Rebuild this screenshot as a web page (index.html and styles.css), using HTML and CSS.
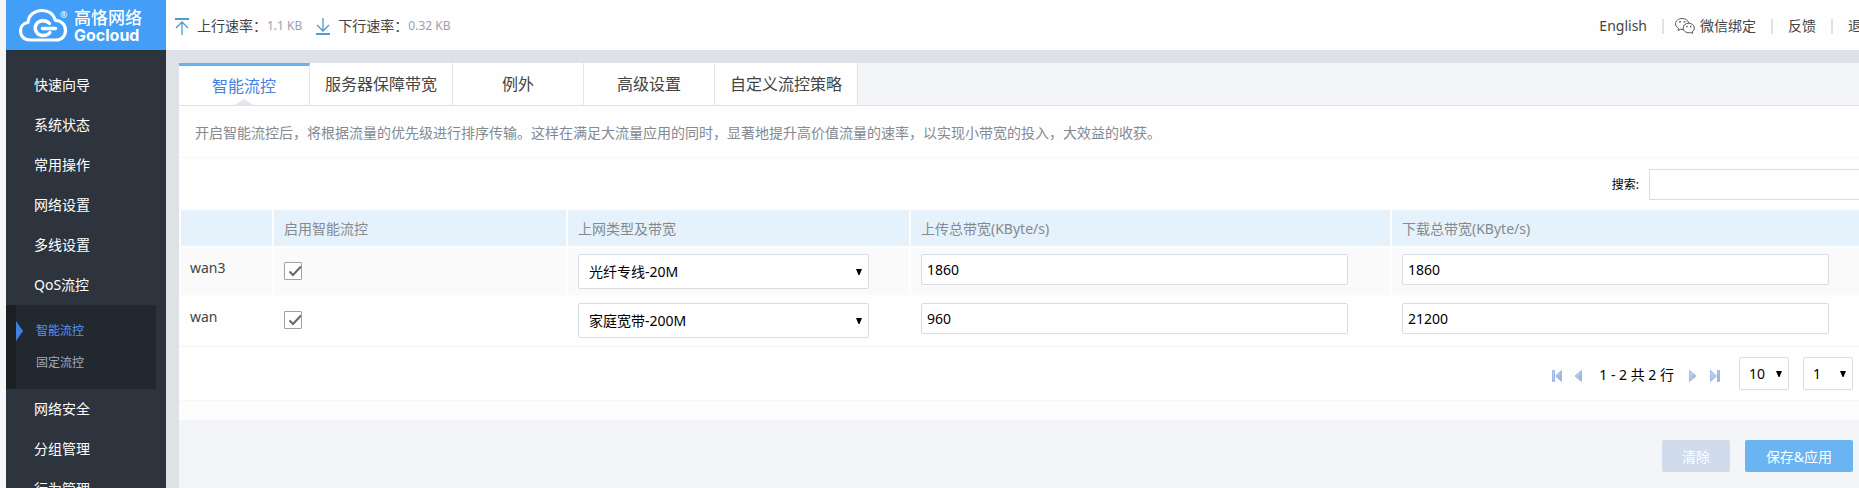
FILE: index.html
```html
<!DOCTYPE html>
<html lang="zh-CN">
<head>
    <meta charset="UTF-8">
    <meta name="viewport" content="width=device-width, initial-scale=1.0">
    <title>智能流控</title>
    <link rel="stylesheet" href="styles.css">
</head>
<body>

    <div class="page">
        <aside class="sidebar">
            <a class="logo" href="#">
                <svg class="logo-cloud" viewBox="0 0 50 34" width="50" height="34" fill="none" stroke="#fff" stroke-linecap="round">
                    <path d="M12 32 C5.500 32 2.500 27.500 2.500 23 C2.500 18.500 5.500 15 10 14.500 C10.500 7 16.500 2.500 24 2.500 C30.500 2.500 35.500 6 37.500 12.500 C43.500 12.500 47.500 17 47.500 22.500 C47.500 28 43.500 32 38 32 Z" stroke-width="3.200" stroke-linejoin="round"/>
                    <path d="M31.500 15.500 C28 11.500 21 11.800 18.300 16.200 C15.500 21 18.500 27.500 25 27.500 C28 27.500 30.500 26.500 32 24.500" stroke-width="3.400"/>
                    <path d="M24.500 20.500 H37.500" stroke-width="3.600"/>
                </svg>
                <span class="logo-mark">®</span>
                <span class="logo-text">
                    <span class="logo-cn">高恪网络</span>
                    <span class="logo-en">Gocloud</span>
                </span>
            </a>
            <nav class="menu">
                <a href="#">快速向导</a>
                <a href="#">系统状态</a>
                <a href="#">常用操作</a>
                <a href="#">网络设置</a>
                <a href="#">多线设置</a>
                <a href="#">QoS流控</a>
                <div class="submenu">
                    <a class="active" href="#">智能流控</a>
                    <a href="#">固定流控</a>
                </div>
                <a href="#">网络安全</a>
                <a href="#">分组管理</a>
                <a href="#">行为管理</a>
            </nav>
        </aside>

        <div class="content">
            <header class="topbar">
                <div class="rates">
                    <svg viewBox="0 0 14 17" width="14" height="17" fill="none" stroke="#4f9bc9">
                        <path d="M0 1 H14" stroke-width="2"/>
                        <path d="M7 17 V4 M1 10 L7 4 L13 10" stroke-width="1.300"/>
                    </svg>
                    <span class="rate-name">上行速率：</span>
                    <span class="rate-value">1.1 KB</span>
                    <svg class="down" viewBox="0 0 14 17" width="14" height="17" fill="none" stroke="#4f9bc9">
                        <path d="M0 16 H14" stroke-width="2"/>
                        <path d="M7 0 V13 M1 7 L7 13 L13 7" stroke-width="1.300"/>
                    </svg>
                    <span class="rate-name">下行速率：</span>
                    <span class="rate-value">0.32 KB</span>
                </div>
                <nav class="links">
                    <a href="#">English</a>
                    <a class="wechat" href="#">
                        <svg viewBox="0 0 20 16" width="20" height="16" fill="none" stroke="#555">
                            <path d="M8.500 11.500 C7.500 11.600 6.500 11.500 5.500 11.200 L3 12.500 L3.500 10.300 C1.500 9 0.500 7.500 0.500 5.800 C0.500 2.900 3.500 0.500 7.200 0.500 C10.600 0.500 13.200 2.400 13.800 5"/>
                            <path d="M13.600 5.200 C16.800 5.200 19.400 7.300 19.400 10 C19.400 11.500 18.500 12.800 17.200 13.700 L17.600 15.400 L15.600 14.500 C12 15.500 8.200 13.500 8.200 10 C8.200 7.300 10.600 5.200 13.600 5.200 Z"/>
                            <path d="M4.200 3.800 h1.600 M8.700 3.800 h1.600 M11.200 8.500 h1.400 M15 8.500 h1.400" stroke-width="1.600"/>
                        </svg>
                        微信绑定
                    </a>
                    <a href="#">反馈</a>
                    <a href="#">退出</a>
                </nav>
            </header>

            <main class="main">
                <div class="tabs">
                    <a class="tab active" href="#">智能流控</a>
                    <a class="tab" href="#">服务器保障带宽</a>
                    <a class="tab" href="#">例外</a>
                    <a class="tab" href="#">高级设置</a>
                    <a class="tab" href="#">自定义流控策略</a>
                </div>
                <p class="intro">开启智能流控后，将根据流量的优先级进行排序传输。这样在满足大流量应用的同时，显著地提升高价值流量的速率，以实现小带宽的投入，大效益的收获。</p>

                <div class="search">
                    <label for="search">搜索:</label>
                    <input type="text" id="search">
                </div>

                <table class="wan-table">
                    <colgroup>
                        <col class="col-name">
                        <col class="col-enable">
                        <col class="col-type">
                        <col>
                        <col>
                    </colgroup>
                    <thead>
                        <tr>
                            <th></th>
                            <th>启用智能流控</th>
                            <th>上网类型及带宽</th>
                            <th>上传总带宽(KByte/s)</th>
                            <th>下载总带宽(KByte/s)</th>
                        </tr>
                    </thead>
                    <tbody>
                        <tr>
                            <td>wan3</td>
                            <td><input type="checkbox" aria-label="启用智能流控 wan3" checked></td>
                            <td><select aria-label="上网类型及带宽 wan3"><option>光纤专线-20M</option></select></td>
                            <td><input type="text" aria-label="上传总带宽 wan3" value="1860"></td>
                            <td><input type="text" aria-label="下载总带宽 wan3" value="1860"></td>
                        </tr>
                        <tr>
                            <td>wan</td>
                            <td><input type="checkbox" aria-label="启用智能流控 wan" checked></td>
                            <td><select aria-label="上网类型及带宽 wan"><option>家庭宽带-200M</option></select></td>
                            <td><input type="text" aria-label="上传总带宽 wan" value="960"></td>
                            <td><input type="text" aria-label="下载总带宽 wan" value="21200"></td>
                        </tr>
                    </tbody>
                </table>

                <div class="pager">
                    <svg width="0" height="0" aria-hidden="true">
                        <linearGradient id="arrow-fill" x1="0" y1="0" x2="1" y2="1">
                            <stop offset="0" stop-color="#cfe0f6"/>
                            <stop offset="1" stop-color="#8aa9e0"/>
                        </linearGradient>
                    </svg>
                    <button type="button" aria-label="第一页">
                        <svg viewBox="0 0 10 12" width="10" height="12"><path d="M0.500 0.500 H2.500 V11.500 H0.500 Z M9.500 0.500 V11.500 L3.500 6 Z"/></svg>
                    </button>
                    <button type="button" aria-label="上一页">
                        <svg viewBox="0 0 10 12" width="10" height="12"><path d="M7.500 0.500 V11.500 L1 6 Z"/></svg>
                    </button>
                    <span class="pager-info">1 - 2 共 2 行</span>
                    <button type="button" aria-label="下一页">
                        <svg viewBox="0 0 10 12" width="10" height="12"><path d="M1.500 0.500 V11.500 L8 6 Z"/></svg>
                    </button>
                    <button type="button" aria-label="最后一页">
                        <svg viewBox="0 0 10 12" width="10" height="12"><path d="M7.500 0.500 H9.500 V11.500 H7.500 Z M0.500 0.500 V11.500 L6.500 6 Z"/></svg>
                    </button>
                    <select aria-label="每页行数"><option>10</option></select>
                    <select aria-label="页码"><option>1</option></select>
                </div>

                <div class="actions">
                    <button type="button" class="btn btn-clear">清除</button>
                    <button type="button" class="btn btn-save">保存&amp;应用</button>
                </div>
            </main>
        </div>
    </div>

</body>
</html>
```
FILE: styles.css
```css
* {
    box-sizing: border-box;
}
body {
    margin: 0;
    padding-left: 6px;
    height: 100vh;
    overflow: hidden;
    background-color: #f5f7f7;
    color: #444;
    font-family: "Noto Sans", "Noto Sans CJK SC", sans-serif;
    font-size: 14px;
    line-height: 20px;
}
a {
    color: inherit;
    text-decoration: none;
}
input, select, button {
    font-family: inherit;
    font-size: 14px;
    color: #000;
}

/* the layout runs a little past the right edge of the window */
.page {
    display: flex;
    width: calc(100% + 27px);
    min-height: 100%;
}

/* sidebar */
.sidebar {
    flex: 0 0 160px;
    background-color: #2d343e;
}
.logo {
    display: flex;
    height: 50px;
    padding: 8px 0 0 12px;
    background-color: #429ef6;
    color: #fff;
}
.logo-mark {
    width: 7px;
    margin-left: -8px;
    font-size: 9px;
    line-height: 14px;
}
.logo-text {
    display: flex;
    flex-direction: column;
    margin-left: 7px;
}
.logo-cn {
    font-size: 17px;
    font-weight: 500;
    line-height: 20px;
}
.logo-en {
    font-family: Inter, "Noto Sans", sans-serif;
    font-size: 16px;
    font-weight: bold;
    line-height: 14px;
}
.menu {
    padding-top: 15px;
    color: #fff;
}
.menu a {
    display: block;
    padding-left: 28px;
    line-height: 40px;
}
.submenu {
    margin-right: 10px;
    padding: 10px 0;
    border-left: 10px solid #1a1f22;
    background-color: #22282f;
    color: #a3abbb;
}
.submenu a {
    position: relative;
    padding-left: 20px;
    font-size: 12px;
    line-height: 32px;
}
.submenu .active {
    color: #5a95ee;
}
.submenu .active::before {
    content: "";
    position: absolute;
    left: 0;
    top: 6px;
    border: 10px solid transparent;
    border-left: 7px solid #4080e0;
    border-right: 0;
}

/* top bar */
.content {
    display: flex;
    flex-direction: column;
    flex: 1;
    min-width: 0;
    background-color: #dee1e6;
}
.topbar {
    display: flex;
    justify-content: space-between;
    align-items: center;
    height: 50px;
    padding: 2px 10px 0 9px;
    background-color: #fefefe;
}
.rates, .links, .wechat {
    display: flex;
    align-items: center;
}
.rate-name {
    margin-left: 8px;
}
.rate-value {
    color: #9b9fb0;
    font-size: 12px;
}
.down {
    margin-left: 14px;
}
.wechat {
    gap: 5px;
}
.links a + a::before {
    content: "";
    width: 2px;
    height: 15px;
    margin: 0 15px;
    background-color: #e0e1ea;
}
.links a {
    display: flex;
    align-items: center;
}
.links .wechat::before {
    margin-right: 6px;
}

/* main panel */
.main {
    flex: 1;
    margin: 13px 13px 0 13px;
    background-color: #f4f5f8;
}
.tabs {
    display: flex;
    border-bottom: 1px solid #e1e2e8;
}
.tab {
    min-width: 131px;
    height: 42px;
    padding: 0 15px;
    border-right: 1px solid #e3e4ec;
    background-color: #fefefe;
    font-size: 16px;
    line-height: 42px;
    text-align: center;
}
.tab.active {
    position: relative;
    border-top: 3px solid #67b3f2;
    color: #4780e0;
    line-height: 40px;
}
.tab.active::after {
    content: "";
    position: absolute;
    left: 56px;
    bottom: 0;
    border: 9px solid transparent;
    border-top: 0;
    border-bottom: 6px solid #e4e5ee;
}
.intro {
    margin: 0;
    padding: 17px 16px 14px;
    border-bottom: 1px solid #f7f7f8;
    background-color: #fefefe;
    color: #858990;
}
.search {
    display: flex;
    justify-content: flex-end;
    align-items: center;
    gap: 10px;
    padding: 11px 0 8px;
    background-color: #fefefe;
}
.search label {
    color: #000;
    font-size: 12px;
}
.search input {
    width: 224px;
    height: 31px;
    border: 1px solid #ddd;
    background-color: #fff;
}

/* wan table */
.wan-table {
    width: 100%;
    table-layout: fixed;
    border-collapse: separate;
    border-spacing: 2px;
    background-color: #fefefe;
}
.col-name {
    width: 91px;
}
.col-enable {
    width: 292px;
}
.col-type {
    width: 341px;
}
.wan-table th {
    height: 36px;
    padding: 2px 10px 0;
    background-color: #e5f2fb;
    color: #858990;
    font-weight: normal;
    text-align: left;
}
.wan-table td {
    height: 47px;
    padding: 6px 10px 0;
    vertical-align: top;
}
.wan-table td:first-child {
    padding: 10px 9px 0;
}
.wan-table tbody tr:first-child td {
    background-color: #fafafa;
}
.wan-table input[type="text"] {
    display: block;
    width: 93%;
    height: 31px;
    padding: 0 5px;
    border: 1px solid #d9dde2;
    border-radius: 2px;
    background-color: #fff;
}
.wan-table input[type="checkbox"] {
    appearance: none;
    display: block;
    width: 18px;
    height: 18px;
    margin: 8px 0 0;
    border: 1px solid #9ca2ac;
    border-radius: 1px;
    background: #fff url("data:image/svg+xml,%3Csvg xmlns='http://www.w3.org/2000/svg' viewBox='0 0 16 16'%3E%3Cpath d='M4.500 8.500 L8 12 L16 3.500' fill='none' stroke='%23666' stroke-width='2'/%3E%3C/svg%3E") no-repeat center / 16px;
}
select {
    appearance: none;
    height: 33px;
    border: 1px solid #d9dde2;
    border-radius: 2px;
    background: #fff url("data:image/svg+xml,%3Csvg xmlns='http://www.w3.org/2000/svg' viewBox='0 0 6 6'%3E%3Cpath d='M0 0 H6 L3.500 6 H2.500 Z'/%3E%3C/svg%3E") no-repeat right 6px center / 6px;
}
.wan-table select {
    display: block;
    width: 291px;
    height: 35px;
    padding: 0 10px;
}

/* pager */
.pager {
    display: flex;
    justify-content: flex-end;
    align-items: center;
    height: 55px;
    padding-right: 20px;
    border-top: 1px solid #f3f3f4;
    border-bottom: 1px solid #f6f6f7;
    background-color: #fefefe;
    color: #000;
}
.pager button {
    display: flex;
    margin-right: 12px;
    padding: 4px 0 0;
    border: none;
    background: none;
    cursor: pointer;
}
.pager button path {
    fill: url(#arrow-fill);
    stroke: #9db8e6;
}
.pager-info {
    margin: 0 14px 0 3px;
    padding-top: 3px;
}
.pager select {
    width: 50px;
    margin-left: 14px;
    padding: 0 9px;
}
.pager button + select {
    margin-left: 7px;
}

/* action buttons */
.actions {
    display: flex;
    justify-content: flex-end;
    gap: 15px;
    padding: 20px 20px 0;
    border-top: 19px solid #fdfdfd;
}
.btn {
    height: 32px;
    min-width: 68px;
    border: none;
    border-radius: 2px;
    color: #fff;
    cursor: pointer;
}
.btn-clear {
    background-color: #d0dcec;
}
.btn-save {
    min-width: 108px;
    background-color: #6ab4f2;
}
```
